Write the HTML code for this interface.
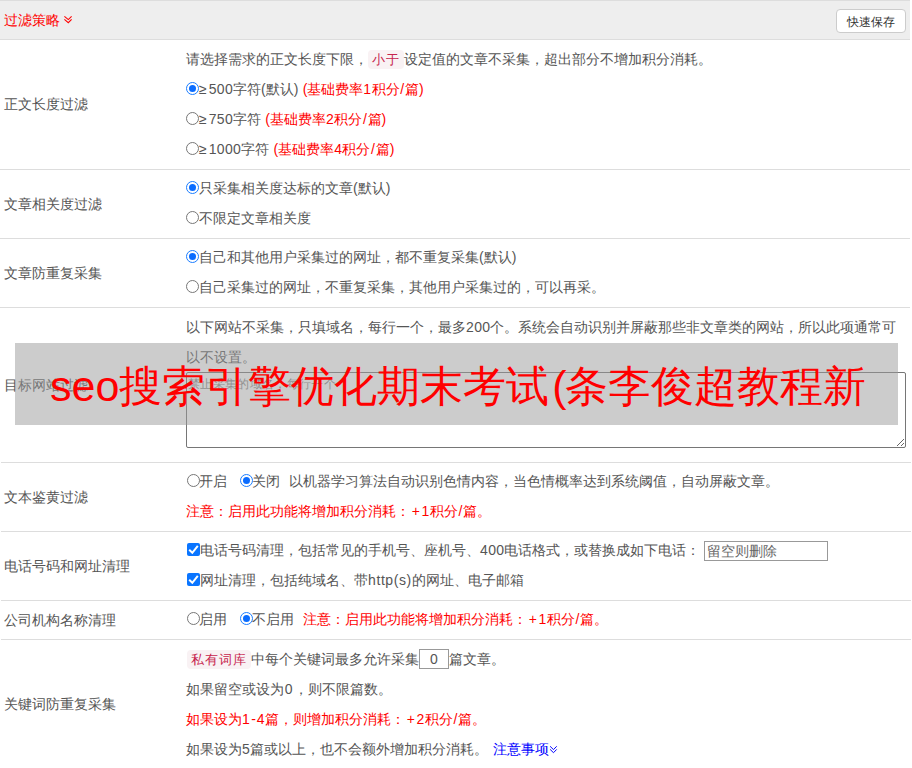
<!DOCTYPE html>
<html><head><meta charset="utf-8">
<style>
*{box-sizing:border-box}
html,body{margin:0;padding:0;background:#fff}
body{width:912px;height:768px;overflow:hidden;position:relative;font-family:"Liberation Sans",sans-serif;font-size:14px;color:#555}
.a{position:absolute;white-space:nowrap;line-height:30px;height:30px}
.hd{position:absolute;left:0;top:0;width:910px;height:40px;background:#eee;border-top:1px solid #ddd;border-bottom:1px solid #ddd}
.ln{position:absolute;left:0;width:910px;height:1px;background:#ddd}
.r{color:#f00}
.n{letter-spacing:.35px}
.ge{margin-right:2px}
.sl{margin:0 .75px}
.pl{margin:0 1.6px 0 1.8px}
.hy{margin:0 1px}
.rad{display:inline-block;width:13px;height:13px;border:1px solid #777;border-radius:50%;vertical-align:middle;position:relative;top:-2px;background:#fff}
.rad.on{border-color:#1a7dff}
.rad.on:after{content:"";position:absolute;left:2px;top:2px;width:7px;height:7px;border-radius:50%;background:#0a6cff}
.sp{display:inline-block;width:12px}
.tag{display:inline-block;background:#f9f2f4;color:#c7254e;padding:0 4px;border-radius:4px;font-size:13px;letter-spacing:1px;line-height:19px;height:19px;vertical-align:top;margin-top:6px}
.cb{display:inline-block;width:13px;height:13px;border-radius:2px;background:#0a75ff;vertical-align:middle;position:relative;top:-2px;margin-left:1px}
textarea::placeholder{color:#888}
input::placeholder{color:#666}
</style></head><body>
<div class="hd"></div>
<div class="a r" style="left:4px;top:5px">过滤策略</div>
<svg style="position:absolute;left:63px;top:15px" width="10" height="10" viewBox="0 0 10 10"><path d="M1.4 1.3 L5.3 4.6 L8.6 1.3 M1.4 4.4 L5.3 7.7 L8.6 4.4" fill="none" stroke="#f00" stroke-width="1.1"/></svg>
<div style="position:absolute;left:836px;top:9px;width:70px;height:24px;border:1px solid #ccc;border-radius:4px;background:#fff;font-size:12px;color:#333;text-align:center;line-height:22px;padding-top:1px">快速保存</div>

<div class="ln" style="top:169px"></div>
<div class="ln" style="top:238px"></div>
<div class="ln" style="top:307px"></div>
<div class="ln" style="top:462px;left:1px"></div>
<div class="ln" style="top:531px;left:1px"></div>
<div class="ln" style="top:600px;left:1px"></div>
<div class="ln" style="top:639px;left:1px"></div>

<!-- labels -->
<div class="a" style="left:4px;top:89px">正文长度过滤</div>
<div class="a" style="left:4px;top:189px">文章相关度过滤</div>
<div class="a" style="left:4px;top:258px">文章防重复采集</div>
<div class="a" style="left:4px;top:370px">目标网站过滤</div>
<div class="a" style="left:4px;top:482px">文本鉴黄过滤</div>
<div class="a" style="left:4px;top:551px">电话号码和网址清理</div>
<div class="a" style="left:4px;top:605px">公司机构名称清理</div>
<div class="a" style="left:4px;top:689px">关键词防重复采集</div>

<!-- row1 -->
<div class="a" style="left:186px;top:44px">请选择需求的正文长度下限，<span class="tag">小于</span>设定值的文章不采集，超出部分不增加积分消耗。</div>
<div class="a" style="left:186px;top:74px"><span class="rad on"></span><span class="ge">≥</span><span class="n">500</span>字符(默认)<span class="n"> </span><span class="r">(基础费率<span class="n">1</span>积分<span class="sl">/</span>篇)</span></div>
<div class="a" style="left:186px;top:104px"><span class="rad"></span><span class="ge">≥</span><span class="n">750</span>字符<span class="n"> </span><span class="r">(基础费率<span class="n">2</span>积分<span class="sl">/</span>篇)</span></div>
<div class="a" style="left:186px;top:134px"><span class="rad"></span><span class="ge">≥</span><span class="n">1000</span>字符<span class="n"> </span><span class="r">(基础费率<span class="n">4</span>积分<span class="sl">/</span>篇)</span></div>
<!-- row2 -->
<div class="a" style="left:186px;top:173px"><span class="rad on"></span>只采集相关度达标的文章(默认)</div>
<div class="a" style="left:186px;top:203px"><span class="rad"></span>不限定文章相关度</div>
<!-- row3 -->
<div class="a" style="left:186px;top:242px"><span class="rad on"></span>自己和其他用户采集过的网址，都不重复采集(默认)</div>
<div class="a" style="left:186px;top:272px"><span class="rad"></span>自己采集过的网址，不重复采集，其他用户采集过的，可以再采。</div>
<!-- row4 -->
<div class="a" style="left:186px;top:312px">以下网站不采集，只填域名，每行一个，最多<span class="n">200</span>个。系统会自动识别并屏蔽那些非文章类的网站，所以此项通常可</div>
<div class="a" style="left:186px;top:342px">以不设置。</div>
<textarea style="position:absolute;left:186px;top:372px;width:720px;height:76px;font-family:'Liberation Sans',sans-serif;font-size:12px;line-height:16px;letter-spacing:.35px;color:#555;padding:3px 1px;border:1px solid #767676;border-radius:2px;resize:both" placeholder="禁止采集的域名，每行一个"></textarea>
<!-- row5 -->
<div class="a" style="left:186px;top:466px"><span class="rad" style="left:1px"></span>开启<span class="sp"></span><span class="rad on" style="left:1px"></span>关闭<span class="sp" style="width:9px"></span>以机器学习算法自动识别色情内容，当色情概率达到系统阈值，自动屏蔽文章。</div>
<div class="a r" style="left:186px;top:496px">注意：启用此功能将增加积分消耗：<span class="pl">+</span><span class="n">1</span>积分<span class="sl">/</span>篇。</div>
<!-- row6 -->
<div class="a" style="left:186px;top:535px"><span class="cb"><svg width="13" height="13" viewBox="0 0 13 13" style="position:absolute;left:0;top:0"><path d="M2.2 6.8 L5.3 9.8 L10.8 2.8" fill="none" stroke="#fff" stroke-width="2"/></svg></span>电话号码清理，包括常见的手机号、座机号、<span class="n">400</span>电话格式，或替换成如下电话：</div>
<input type="text" placeholder="留空则删除" style="position:absolute;left:704px;top:541px;width:124px;height:20px;border:1px solid #999;font-size:14px;padding:0 2px;font-family:'Liberation Sans',sans-serif;outline:none">
<div class="a" style="left:186px;top:565px"><span class="cb"><svg width="13" height="13" viewBox="0 0 13 13" style="position:absolute;left:0;top:0"><path d="M2.2 6.8 L5.3 9.8 L10.8 2.8" fill="none" stroke="#fff" stroke-width="2"/></svg></span>网址清理，包括纯域名、带<span class="n" style="letter-spacing:.6px">http(s)</span>的网址、电子邮箱</div>
<!-- row7 -->
<div class="a" style="left:186px;top:604px"><span class="rad" style="left:1px"></span>启用<span class="sp"></span><span class="rad on" style="left:1px"></span>不启用<span class="sp" style="width:9px"></span><span class="r">注意：启用此功能将增加积分消耗：<span class="pl">+</span><span class="n">1</span>积分<span class="sl">/</span>篇。</span></div>
<!-- row8 -->
<div class="a" style="left:186px;top:644px"><span class="tag" style="margin-left:1px">私有词库</span>中每个关键词最多允许采集<span style="display:inline-block;width:30px;height:20px;border:1px solid #999;text-align:center;line-height:18px;vertical-align:top;margin-top:5px">0</span>篇文章。</div>
<div class="a" style="left:186px;top:674px">如果留空或设为<span class="n" style="margin:0 .7px">0</span>，则不限篇数。</div>
<div class="a r" style="left:186px;top:704px">如果设为<span class="n">1</span><span class="hy">-</span><span class="n">4</span>篇，则增加积分消耗：<span class="pl">+</span><span class="n">2</span>积分<span class="sl">/</span>篇。</div>
<div class="a" style="left:186px;top:734px">如果设为<span class="n">5</span>篇或以上，也不会额外增加积分消耗。<span class="n"> </span><span style="color:#00f;margin-left:1px">注意事项</span></div>
<svg style="position:absolute;left:549px;top:745px" width="9" height="9" viewBox="0 0 9 9"><path d="M1.1 1.3 L4.5 4.6 L7.7 1.3 M1.1 4.4 L4.5 7.7 L7.7 4.4" fill="none" stroke="#00f" stroke-width="1"/></svg>

<!-- overlay -->
<div style="position:absolute;left:15px;top:343px;width:883px;height:82px;background:rgba(153,153,153,.5)"></div>
<div class="a r" style="left:50px;top:361px;font-size:43px;line-height:50px;height:50px">seo搜索引擎优化期末考试<span style="margin-left:3px;margin-right:-2px">(</span>条李俊超教程新</div>
</body></html>
